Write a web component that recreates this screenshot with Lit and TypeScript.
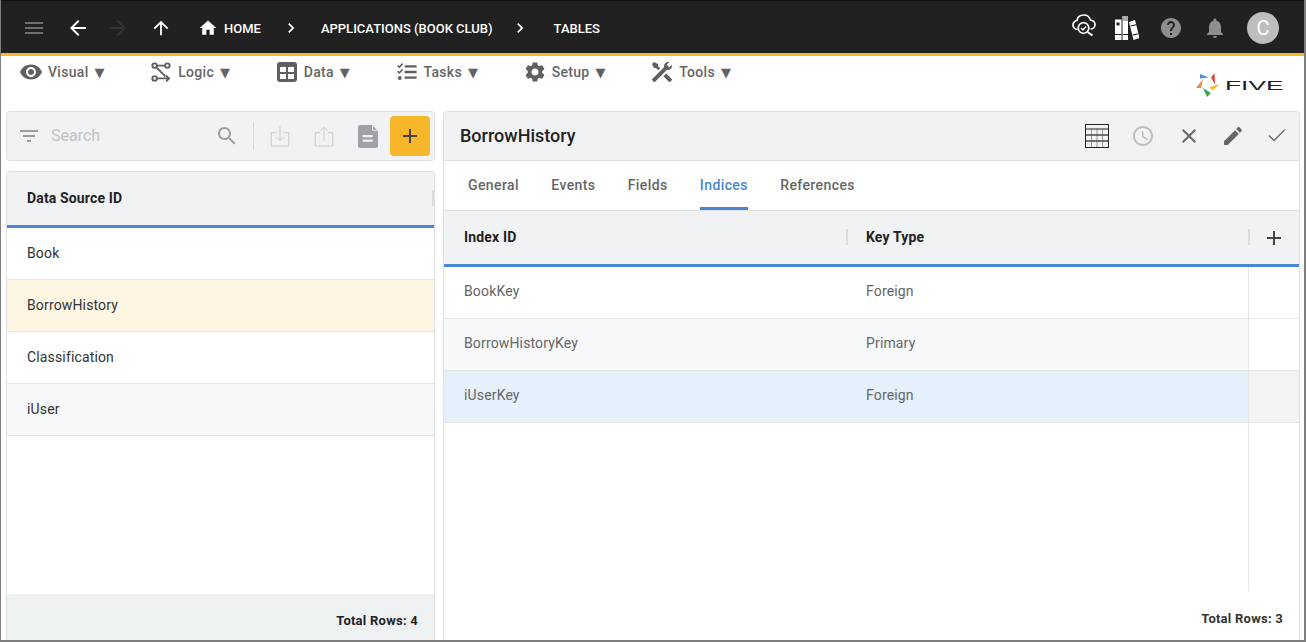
import { LitElement, html, css, svg } from 'lit';
import { customElement } from 'lit/decorators.js';

const icon = (body: unknown, cls = '') => html`<svg class="icon ${cls}" viewBox="0 0 24 24">${body}</svg>`;
const p = (d: string) => svg`<path d=${d}></path>`;

const ICONS = {
  menu: p('M3 18h18v-2H3v2zm0-5h18v-2H3v2zm0-7v2h18V6H3z'),
  back: p('M20 11H7.83l5.59-5.59L12 4l-8 8 8 8 1.41-1.41L7.83 13H20v-2z'),
  forward: p('M12 4l-1.41 1.41L16.17 11H4v2h12.17l-5.58 5.59L12 20l8-8z'),
  up: p('M4 12l1.41 1.41L11 7.83V20h2V7.83l5.58 5.59L20 12l-8-8-8 8z'),
  home: p('M10 20v-6h4v6h5v-8h3L12 3 2 12h3v8z'),
  chevron: p('M10 6L8.59 7.41 13.17 12l-4.58 4.59L10 18l6-6z'),
  help: p('M12 2C6.48 2 2 6.48 2 12s4.48 10 10 10 10-4.48 10-10S17.52 2 12 2zm1 17h-2v-2h2v2zm2.07-7.75l-.9.92C13.45 12.9 13 13.5 13 15h-2v-.5c0-1.1.45-2.1 1.17-2.83l1.24-1.26c.37-.36.59-.86.59-1.41 0-1.1-.9-2-2-2s-2 .9-2 2H8c0-2.21 1.79-4 4-4s4 1.79 4 4c0 .88-.36 1.68-.93 2.25z'),
  bell: p('M12 22c1.1 0 2-.9 2-2h-4c0 1.1.89 2 2 2zm6-6v-5c0-3.07-1.64-5.64-4.5-6.32V4c0-.83-.67-1.5-1.5-1.5s-1.5.67-1.5 1.5v.68C7.63 5.36 6 7.92 6 11v5l-2 2v1h16v-1l-2-2z'),
  eye: p('M12 4.5C7 4.5 2.73 7.61 1 12c1.73 4.39 6 7.5 11 7.5s9.27-3.11 11-7.5c-1.73-4.39-6-7.5-11-7.5zM12 17c-2.76 0-5-2.24-5-5s2.24-5 5-5 5 2.24 5 5-2.24 5-5 5zm0-8c-1.66 0-3 1.34-3 3s1.34 3 3 3 3-1.34 3-3-1.34-3-3-3z'),
  gear: p('M19.14 12.94c.04-.3.06-.61.06-.94 0-.32-.02-.64-.07-.94l2.03-1.58c.18-.14.23-.41.12-.61l-1.92-3.32c-.12-.22-.37-.29-.59-.22l-2.39.96c-.5-.38-1.03-.7-1.62-.94l-.36-2.54c-.04-.24-.24-.41-.48-.41h-3.84c-.24 0-.43.17-.47.41l-.36 2.54c-.59.24-1.13.57-1.62.94l-2.39-.96c-.22-.08-.47 0-.59.22L2.74 8.87c-.12.21-.08.47.12.61l2.03 1.58c-.05.3-.09.63-.09.94s.02.64.07.94l-2.03 1.58c-.18.14-.23.41-.12.61l1.92 3.32c.12.22.37.29.59.22l2.39-.96c.5.38 1.03.7 1.62.94l.36 2.54c.05.24.24.41.48.41h3.84c.24 0 .44-.17.47-.41l.36-2.54c.59-.24 1.13-.56 1.62-.94l2.39.96c.22.08.47 0 .59-.22l1.92-3.32c.12-.22.07-.47-.12-.61l-2.01-1.58zM12 15.6c-1.98 0-3.6-1.62-3.6-3.6s1.62-3.6 3.6-3.6 3.6 1.62 3.6 3.6-1.62 3.6-3.6 3.6z'),
  search: p('M15.5 14h-.79l-.28-.27C15.41 12.59 16 11.11 16 9.5 16 5.91 13.09 3 9.5 3S3 5.91 3 9.5 5.91 16 9.5 16c1.61 0 3.09-.59 4.23-1.57l.27.28v.79l5 4.99L20.49 19l-4.99-5zm-6 0C7.01 14 5 11.99 5 9.5S7.01 5 9.5 5 14 7.01 14 9.5 11.99 14 9.5 14z'),
  filter: p('M10 18h4v-2h-4v2zM3 6v2h18V6H3zm3 7h12v-2H6v2z'),
  doc: svg`<path fill-rule="evenodd" d="M5.400 2.600H15.500L20.600 7.700V20.300a2 2 0 0 1-2 2H5.400a2 2 0 0 1-2-2V4.600a2 2 0 0 1 2-2zM7.400 11.100v2H16v-2zM7.400 14.900v2H16v-2z"></path><path d="M16 3.200v4h4" fill="none" stroke="#f1f2f4" stroke-width=".8"></path>`,
  add: p('M19 13h-6v6h-2v-6H5v-2h6V5h2v6h6v2z'),
  close: p('M19 6.41L17.59 5 12 10.59 6.41 5 5 6.41 10.59 12 5 17.59 6.41 19 12 13.41 17.59 19 19 17.59 13.41 12z'),
  edit: p('M3 17.25V21h3.75L17.81 9.94l-3.75-3.75L3 17.25zM20.71 7.04c.39-.39.39-1.02 0-1.41l-2.34-2.34c-.39-.39-1.02-.39-1.41 0l-1.83 1.83 3.75 3.75 1.83-1.83z'),
  check: svg`<path transform="translate(0 -1)" d="M9 16.6L4.4 12l-.9.9L9 18.4 20.6 6.8l-.9-.9z"></path>`,
  clock: p('M11.99 2C6.47 2 2 6.48 2 12s4.47 10 9.99 10C17.52 22 22 17.52 22 12S17.52 2 11.99 2zM12 20c-4.42 0-8-3.58-8-8s3.58-8 8-8 8 3.58 8 8-3.58 8-8 8zm.5-13H11v6l5.25 3.15.75-1.23-4.5-2.67z'),
  dataTable: p('M5 2h14a3 3 0 0 1 3 3v14a3 3 0 0 1-3 3H5a3 3 0 0 1-3-3V5a3 3 0 0 1 3-3zm0 5v5h6V7H5zm8 0v5h6V7h-6zm-8 7v5h6v-5H5zm8 0v5h6v-5h-6z'),
  logic: svg`<g transform="translate(2.4 2.4) scale(.8)" fill="none" stroke="currentColor" stroke-width="2.400"><circle cx="4" cy="4" r="2.800"></circle><circle cx="20" cy="4" r="2.800"></circle><circle cx="4" cy="20" r="2.800"></circle><path d="M7 4h10M6.500 6.500l11 11M7 20h15M18.500 16.500l3.500 3.500-3.500 3.500"></path></g>`,
  tasks: svg`<g transform="translate(2.4 2.4) scale(.8)"><path d="M9 3.500h15v3H9zM9 10.500h15v3H9zM9 17.500h15v3H9z"></path><path d="M.5 4l2 2L6.500 1.500" fill="none" stroke="currentColor" stroke-width="2"></path><path d="M.5 11l2 2 4-4.500" fill="none" stroke="currentColor" stroke-width="2"></path><circle cx="3" cy="19.500" r="2.400"></circle></g>`,
  tools: svg`<path transform="matrix(-1 0 0 1 24 0)" d="M21.71 20.290L20.290 21.710A1 1 0 0 1 18.880 21.710L7 9.850A3.810 3.810 0 0 1 6 10A4 4 0 0 1 2.220 4.700L4.760 7.240L5.290 6.710L6.710 5.290L7.240 4.760L4.700 2.220A4 4 0 0 1 10 6A3.810 3.810 0 0 1 9.850 7L21.710 18.880A1 1 0 0 1 21.710 20.290M2.290 18.880A1 1 0 0 0 2.290 20.290L3.710 21.710A1 1 0 0 0 5.120 21.710L10.590 16.250L7.760 13.420M20 2L16 4V6L13.830 8.170L15.830 10.170L18 8H20L22 4Z"></path>`,
  cloud: svg`<g fill="none" stroke="currentColor" stroke-width="1.700"><path d="M5.500 15.500C2.500 15.500 1 13 1 11C1 8.500 3 6.500 5 6.500C5.500 3 8.500 1 12 1C15 1 17.500 3 18.500 6C21 6.500 23 8.500 23 10.500C23 13 21 15 18.500 15"></path><circle cx="11.500" cy="14" r="5.300"></circle><path d="M15.500 18l5 3.500" stroke-width="2"></path><path d="M9 14l2 2 3-3.500" stroke-width="1.400"></path></g>`,
  books: svg`<path d="M0 3.500h6.500V24H0zM7.500 0H13v24H7.500z"></path><path d="M7.500 0H13v5H7.500z" fill="#aaa"></path><path d="M1.500 6.500h3v3h-3zM0 18h6.500v1H0zM7.500 18H13v1H7.500z" fill="#222"></path><path d="M14 6l6-2 4.500 18-6 2z"></path><path d="M15.400 9.600l5.600-1.400.3 1-5.600 1.400zM17.500 18.600l5.600-1.400.3 1-5.600 1.400z" fill="#222"></path>`,
  download: svg`<g fill="none" stroke="currentColor" stroke-width="1"><path d="M7.500 7.500H1.500v16h21v-16h-6"></path><path d="M12 0v17M7.500 12.500l4.500 4.500 4.500-4.500"></path></g>`,
  upload: svg`<g fill="none" stroke="currentColor" stroke-width="1"><path d="M7.500 7.500H1.500v16h21v-16h-6"></path><path d="M12 17V1M7.500 5.500L12 1l4.500 4.500"></path></g>`,
  grid: svg`<g fill="none" stroke="#9a9a9a" stroke-width="1"><path d="M6.500 5v18M12 5v18M17.500 5v18M1 11h22M1 17h22"></path></g><g fill="none" stroke="#222" stroke-width="1"><rect x=".5" y=".5" width="23" height="23"></rect><path d="M1 5h22M1 11h22M1 17h22"></path></g>`,
};

const MENU: [keyof typeof ICONS, string][] = [
  ['eye', 'Visual'],
  ['logic', 'Logic'],
  ['dataTable', 'Data'],
  ['tasks', 'Tasks'],
  ['gear', 'Setup'],
  ['tools', 'Tools'],
];

@customElement('app-root')
export class AppRoot extends LitElement {
  static styles = css`
    :host {
      display: block;
      width: 1306px;
      height: 642px;
      font-family: Roboto, "Liberation Sans", sans-serif;
      overflow: hidden;
    }
    .frame {
      box-sizing: border-box;
      width: 1306px;
      height: 642px;
      display: flex;
      flex-direction: column;
      background: #fff;
      border-left: 1px solid #7f7f7f;
      border-right: 2px solid #7f7f7f;
      border-bottom: 2px solid #7f7f7f;
    }
    .icon { display: block; width: 24px; height: 24px; fill: currentColor; flex: none; }

    /* top bar */
    .topbar {
      box-sizing: border-box;
      height: 56px;
      flex: none;
      display: flex;
      align-items: center;
      padding: 1px 25px 0 21px;
      background: #212121;
      border-top: 1px solid #111;
      border-bottom: 3px solid #f8b62a;
      color: #fff;
    }
    .menu-btn { color: #6f6f6f; margin-right: 20px; }
    .fwd { color: #333; margin: 0 20px 0 16px; }
    .up { margin-right: 26px; width: 22px; height: 22px; }
    .home { width: 20px; height: 20px; margin-right: 6px; }
    .crumb { font-size: 13px; font-weight: 500; padding-top: 1px; }
    .chev { width: 20px; height: 20px; }
    .chev-a { margin: 0 20px 0 20px; }
    .chev-b { margin: 0 24px 0 17px; }
    .spacer { flex: 1; }
    .cloud { margin: 0 19px 4px 0; }
    .books { margin-right: 20px; }
    .gray { color: #8e8e8e; }
    .help { margin-right: 20px; }
    .bell { margin-right: 20px; }
    .avatar {
      width: 32px;
      height: 32px;
      border-radius: 50%;
      background: #bdbdbd;
      display: flex;
      align-items: center;
      justify-content: center;
      font-size: 20px;
    }

    /* menu row */
    .menubar {
      height: 55px;
      flex: none;
      display: flex;
      justify-content: space-between;
      padding: 4px 20px 0 18px;
      box-sizing: border-box;
    }
    .menus { display: flex; gap: 44.4px; height: 24px; }
    .menu-item {
      display: flex;
      align-items: center;
      color: #666;
      font-size: 14px;
      font-weight: 500;
      letter-spacing: 0.3px;
      white-space: nowrap;
    }
    .menu-item .icon { margin-right: 5px; color: #5f5f5f; }
    .caret { margin-left: 6px; font-size: 13px; font-family: "DejaVu Sans", sans-serif; color: #5f6368; }
    .logo { display: block; margin-top: 13px; }

    /* panels */
    .panels {
      flex: 1;
      min-height: 0;
      display: grid;
      grid-template-columns: 429px 857px;
      column-gap: 8px;
      padding-left: 5px;
    }
    .left, .right { display: flex; flex-direction: column; min-height: 0; }
    .bar {
      box-sizing: border-box;
      height: 50px;
      flex: none;
      display: flex;
      align-items: center;
      background: #f1f2f4;
      border: 1px solid #e0e0e0;
      border-radius: 4px 4px 0 0;
    }
    .left .bar { border-radius: 4px; padding: 0 4px 0 10px; margin-bottom: 10px; }
    .bar .filter { color: #9e9e9e; margin-right: 10px; }
    .search-text { flex: 1; color: #c0c2c5; font-size: 16px; margin-bottom: 2px; }
    .bar .search { color: #9aa0a6; }
    .divider { width: 1px; height: 28px; background: #d8d8d8; margin: 0 16px 0 14px; }
    .ghost { color: #c0c4c8; width: 20px; height: 25px; }
    .ghost.dl { margin-right: 24px; }
    .ghost.ul { margin-right: 20px; }
    .doc { color: #9ea2a6; width: 28px; height: 28px; margin-right: 8px; }
    .add {
      width: 40px;
      height: 40px;
      background: #f8b62a;
      border-radius: 4px;
      color: #444;
      display: flex;
      align-items: center;
      justify-content: center;
    }

    .table {
      flex: 1;
      min-height: 0;
      display: flex;
      flex-direction: column;
      box-sizing: border-box;
      border: 1px solid #e0e0e0;
      border-bottom: none;
    }
    .left .table { border-radius: 4px 4px 0 0; }
    .head {
      flex: none;
      height: 56px;
      box-sizing: border-box;
      background: #f1f2f4;
      border-bottom: 3px solid #4a86d4;
      display: flex;
      align-items: center;
      font-size: 14px;
      font-weight: 700;
      letter-spacing: 0.15px;
      color: #222;
    }
    .left .head { padding: 0 0 2px 20px; justify-content: space-between; }
    .sep { width: 2px; height: 16px; background: #dcdcdc; }
    .row {
      box-sizing: border-box;
      height: 52px;
      flex: none;
      display: flex;
      align-items: center;
      font-size: 14px;
      letter-spacing: 0.15px;
      border-bottom: 1px solid #e6e6e6;
    }
    .left .row { padding: 0 0 2px 20px; color: #333; }
    .row.sel { background: #fff5e3; }
    .row.alt { background: #f7f8fa; }
    .fill { flex: 1; }
    .foot {
      flex: none;
      display: flex;
      align-items: center;
      justify-content: flex-end;
      font-size: 13px;
      font-weight: 700;
      letter-spacing: 0.25px;
      color: #333;
      box-sizing: border-box;
    }
    .left .foot { height: 46px; background: #eef1f2; padding: 6px 16px 0 0; color: #222; }

    /* right panel */
    .title { flex: 1; padding: 0 0 2px 16px; font-size: 18px; font-weight: 500; color: #222; }
    .actions { display: flex; gap: 20px; padding-right: 10px; color: #666; }
    .actions .wider { margin-right: 2px; }
    .actions .faint { color: #bdbdbd; }
    .tabs {
      box-sizing: border-box;
      height: 49px;
      flex: none;
      display: flex;
      gap: 32.3px;
      padding-left: 24px;
      border-left: 1px solid #e0e0e0;
      border-right: 1px solid #e0e0e0;
      font-size: 14px;
      font-weight: 500;
      letter-spacing: 0.4px;
      color: #666;
    }
    .tab { display: flex; align-items: center; padding-top: 1px; box-sizing: border-box; height: 49px; border-bottom: 3px solid transparent; }
    .tab.on { color: #4a86d4; border-bottom-color: #4a86d4; }
    .right .table { border-top: 1px solid #e0e0e0; }
    .cols { display: grid; grid-template-columns: 402px 402px 1fr; width: 100%; height: 100%; }
    .head .cols { box-sizing: border-box; padding-bottom: 2px; }
    .cell { display: flex; align-items: center; padding: 0 0 4px 20px; box-sizing: border-box; }
    .head .cell { padding-bottom: 0; }
    .head-cell { display: flex; align-items: center; }
    .head-cell .sep { margin-right: 18px; }
    .head-add { display: flex; align-items: center; color: #444; }
    .head-add .sep { margin-right: 12px; }
    .head-add .icon { margin-top: 2px; }
    .right .row { color: #666; }
    .row.pick { background: #e6f0fb; }
    .act { border-left: 1px solid #e6e6e6; height: 100%; background: #fff; }
    .row.pick .act { background: #f3f3f3; }
    .rest { flex: 1; display: flex; justify-content: flex-end; }
    .rest i { display: block; width: 50px; border-left: 1px solid #e6e6e6; }
    .right .foot { height: 49px; padding: 5px 16px 0 0; }
  `;

  render() {
    return html`
      <div class="frame">
        <header class="topbar">
          ${icon(ICONS.menu, 'menu-btn')}
          ${icon(ICONS.back)}
          ${icon(ICONS.forward, 'fwd')}
          ${icon(ICONS.up, 'up')}
          ${icon(ICONS.home, 'home')}
          <span class="crumb">HOME</span>
          ${icon(ICONS.chevron, 'chev chev-a')}
          <span class="crumb">APPLICATIONS (BOOK CLUB)</span>
          ${icon(ICONS.chevron, 'chev chev-b')}
          <span class="crumb">TABLES</span>
          <span class="spacer"></span>
          ${icon(ICONS.cloud, 'cloud')}
          ${icon(ICONS.books, 'books')}
          ${icon(ICONS.help, 'gray help')}
          ${icon(ICONS.bell, 'gray bell')}
          <span class="avatar">C</span>
        </header>

        <nav class="menubar">
          <div class="menus">
            ${MENU.map(([name, label]) => html`
              <div class="menu-item">${icon(ICONS[name])}${label}<span class="caret">▼</span></div>
            `)}
          </div>
          <svg class="logo" width="88" height="25" viewBox="0 0 88 25">
            <polygon points="4,1 13,4.500 4,5.500" fill="#4a8fe0"></polygon>
            <polygon points="18.500,0 15,4.500 19,11.500" fill="#e0403a"></polygon>
            <polygon points="7,6 0,15 5,15" fill="#f58a2c"></polygon>
            <polygon points="24,11 13,14.500 17,17" fill="#f8b62a"></polygon>
            <polygon points="7,15 15,20 11,24" fill="#3fa55a"></polygon>
            <text x="29" y="16.500" font-size="12.500" textLength="58.500" lengthAdjust="spacingAndGlyphs" font-family="Liberation Sans, sans-serif" fill="#222">FIVE</text>
          </svg>
        </nav>

        <main class="panels">
          <section class="left">
            <div class="bar">
              ${icon(ICONS.filter, 'filter')}
              <span class="search-text">Search</span>
              ${icon(ICONS.search, 'search')}
              <span class="divider"></span>
              ${icon(ICONS.download, 'ghost dl')}
              ${icon(ICONS.upload, 'ghost ul')}
              ${icon(ICONS.doc, 'doc')}
              <span class="add">${icon(ICONS.add)}</span>
            </div>
            <div class="table">
              <div class="head"><span>Data Source ID</span><span class="sep"></span></div>
              <div class="row">Book</div>
              <div class="row sel">BorrowHistory</div>
              <div class="row">Classification</div>
              <div class="row alt">iUser</div>
              <div class="fill"></div>
              <div class="foot">Total Rows: 4</div>
            </div>
          </section>

          <section class="right">
            <div class="bar">
              <span class="title">BorrowHistory</span>
              <div class="actions">
                ${icon(ICONS.grid, 'wider')}
                ${icon(ICONS.clock, 'faint wider')}
                ${icon(ICONS.close)}
                ${icon(ICONS.edit)}
                ${icon(ICONS.check)}
              </div>
            </div>
            <div class="tabs">
              ${['General', 'Events', 'Fields', 'Indices', 'References'].map(
                (t) => html`<span class="tab ${t === 'Indices' ? 'on' : ''}">${t}</span>`
              )}
            </div>
            <div class="table">
              <div class="head">
                <div class="cols">
                  <div class="cell">Index ID</div>
                  <div class="head-cell"><span class="sep"></span>Key Type</div>
                  <div class="head-add"><span class="sep"></span>${icon(ICONS.add)}</div>
                </div>
              </div>
              ${[
                ['BookKey', 'Foreign', ''],
                ['BorrowHistoryKey', 'Primary', 'alt'],
                ['iUserKey', 'Foreign', 'pick'],
              ].map(([id, type, cls]) => html`
                <div class="row ${cls}">
                  <div class="cols">
                    <div class="cell">${id}</div>
                    <div class="cell">${type}</div>
                    <div class="act"></div>
                  </div>
                </div>
              `)}
              <div class="rest"><i></i></div>
              <div class="foot">Total Rows: 3</div>
            </div>
          </section>
        </main>
      </div>
    `;
  }
}

declare global {
  interface HTMLElementTagNameMap {
    'app-root': AppRoot;
  }
}
